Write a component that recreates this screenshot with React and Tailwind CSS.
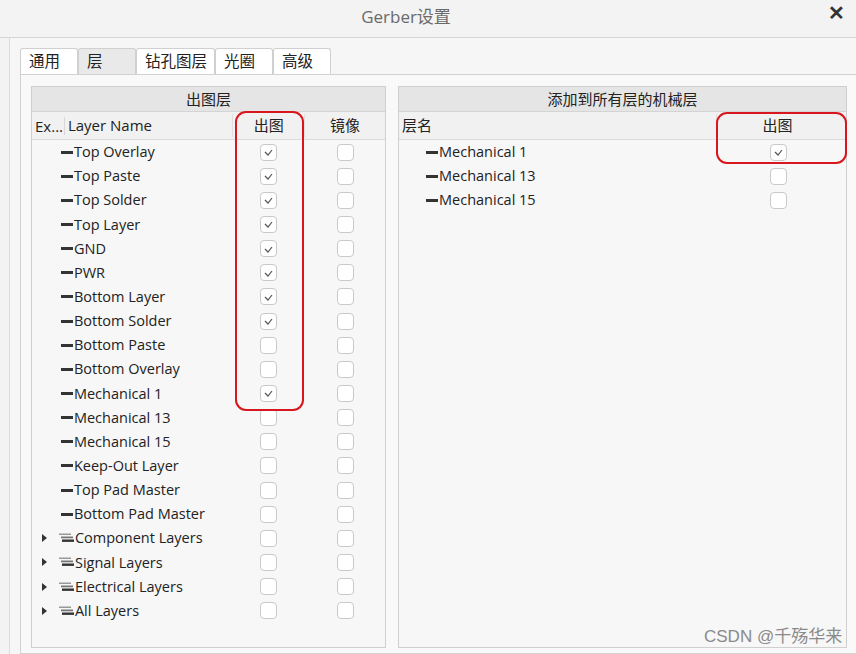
import React from "react";

const FONT = { fontFamily: '"Open Sans", "Noto Sans CJK SC", sans-serif' };

function Check({ checked }) {
  return (
    <div className="w-[17px] h-[17px] rounded-[4px] border border-[#c9c9c9] bg-white flex items-center justify-center">
      {checked && (
        <svg width="9" height="7" viewBox="0 0 9 7" className="mt-[1px]">
          <path d="M1 3 L4 6 L8 1" fill="none" stroke="#555" strokeWidth="1.2" />
        </svg>
      )}
    </div>
  );
}

function Dash() {
  return <div className="w-[12px] h-[3px] bg-[#333] mr-[1px]" />;
}

function Stack() {
  return (
    <svg width="15" height="10" viewBox="0 0 15 10" className="mr-[1px]">
      <rect x="0" y="0.5" width="12" height="1.5" fill="#999" />
      <rect x="2" y="3.5" width="12" height="1.8" fill="#777" />
      <rect x="3" y="6.5" width="12" height="2.4" fill="#333" />
    </svg>
  );
}

function Tri() {
  return (
    <svg width="5" height="8" viewBox="0 0 5 8">
      <path d="M0 0 L5 4 L0 8 Z" fill="#333" />
    </svg>
  );
}

const leftRows = [
  ["Top Overlay", true],
  ["Top Paste", true],
  ["Top Solder", true],
  ["Top Layer", true],
  ["GND", true],
  ["PWR", true],
  ["Bottom Layer", true],
  ["Bottom Solder", true],
  ["Bottom Paste", false],
  ["Bottom Overlay", false],
  ["Mechanical 1", true],
  ["Mechanical 13", false],
  ["Mechanical 15", false],
  ["Keep-Out Layer", false],
  ["Top Pad Master", false],
  ["Bottom Pad Master", false],
  ["Component Layers", false, true],
  ["Signal Layers", false, true],
  ["Electrical Layers", false, true],
  ["All Layers", false, true],
];

const rightRows = [
  ["Mechanical 1", true],
  ["Mechanical 13", false],
  ["Mechanical 15", false],
];

const tabs = [
  ["通用", "w-[58px]"],
  ["层", "w-[58px]"],
  ["钻孔图层", "w-[79px]"],
  ["光圈", "w-[58px]"],
  ["高级", "w-[58px]"],
];

export default function App() {
  return (
    <div className="relative w-[856px] h-[654px] overflow-hidden bg-[#f3f3f3] text-[#222] flex flex-col" style={FONT}>
      {/* title bar */}
      <div className="h-[38px] shrink-0 flex items-center justify-center border-b border-[#d6d6d6] relative">
        <span className="text-[17px] text-[#6a6a6a] -mt-[4px] mr-[44px]">Gerber设置</span>
        <span className="absolute right-[11px] -top-[2px] text-[20px] font-bold text-[#333]">✕</span>
      </div>
      {/* body */}
      <div className="flex-1 ml-[9px] border-l border-[#dcdcdc] bg-[#f6f6f6] pl-[10px] pt-[10px] flex flex-col">
        {/* tabs */}
        <div className="flex h-[26px] items-end">
          {tabs.map(([t, w], i) => (
            <div
              key={t}
              className={`${w} h-[26px] border border-b-0 border-[#d0d0d0] rounded-t-[3px] text-[15.5px] leading-[24px] pl-[8px] ${
                i === 1 ? "bg-[#e9e9e9]" : "bg-white"
              }`}
            >
              {t}
            </div>
          ))}
        </div>
        {/* tab pane */}
        <div className="flex-1 border border-[#d2d2d2] border-r-0 bg-[#f9f9f9] pl-[10px] pt-[11px] pb-[5px] flex gap-[12px]">
          {/* left panel */}
          <div className="w-[355px] border border-[#cfcfcf] bg-[#f7f7f7] flex flex-col">
            <div className="h-[25px] bg-[#e5e5e5] border-b border-[#d4d4d4] flex items-center justify-center text-[15px]">
              出图层
            </div>
            <div className="h-[28px] bg-[#f1f1f1] border-b border-[#dcdcdc] flex items-center text-[15px]">
              <div className="w-[33px] pl-[3px] border-r border-[#d8d8d8] h-[18px] leading-[18px]">Ex...</div>
              <div className="w-[168px] pl-[3px]">Layer Name</div>
              <div className="w-[72px] text-center border-l border-[#e0e0e0]">出图</div>
              <div className="w-[81px] text-center border-l border-[#e0e0e0]">镜像</div>
            </div>
            <div>
              {leftRows.map(([name, c, group]) => (
                <div key={name} className="h-[24.15px] flex items-center text-[14.5px]">
                  <div className="w-[33px] flex items-center pl-[10px]">{group && <Tri />}</div>
                  <div className="w-[168px] flex items-center">
                    {group ? (
                      <span className="ml-[-6px]"><Stack /></span>
                    ) : (
                      <span className="ml-[-4px]"><Dash /></span>
                    )}
                    <span>{name}</span>
                  </div>
                  <div className="w-[72px] flex justify-center pl-[1px]">
                    <Check checked={c} />
                  </div>
                  <div className="w-[81px] flex justify-center pl-[1px]">
                    <Check checked={false} />
                  </div>
                </div>
              ))}
            </div>
          </div>
          {/* right panel */}
          <div className="w-[449px] border border-[#cfcfcf] bg-[#f7f7f7] flex flex-col">
            <div className="h-[25px] bg-[#e5e5e5] border-b border-[#d4d4d4] flex items-center justify-center text-[15px]">
              添加到所有层的机械层
            </div>
            <div className="h-[28px] bg-[#f1f1f1] border-b border-[#dcdcdc] flex items-center text-[15px]">
              <div className="w-[317px] pl-[3px]">层名</div>
              <div className="w-[130px] text-center border-l border-[#e0e0e0] pr-[8px]">出图</div>
            </div>
            <div>
              {rightRows.map(([name, c]) => (
                <div key={name} className="h-[24.15px] flex items-center text-[14.5px]">
                  <div className="w-[317px] flex items-center pl-[27px]">
                    <Dash />
                    <span>{name}</span>
                  </div>
                  <div className="w-[130px] flex justify-center pr-[6px]">
                    <Check checked={c} />
                  </div>
                </div>
              ))}
            </div>
          </div>
        </div>
      </div>
      {/* red highlight boxes */}
      <div className="absolute left-[235px] top-[111px] w-[69px] h-[300px] border-[2.5px] border-[#d8161d] rounded-[11px]" />
      <div className="absolute left-[716px] top-[112px] w-[131px] h-[52px] border-[2.5px] border-[#d8161d] rounded-[11px]" />
      {/* watermark */}
      <div className="absolute left-[704px] top-[624px] text-[17px] text-[#8a8a8a]" style={{ fontFamily: '"Liberation Sans", "Noto Sans CJK SC", sans-serif' }}>
        CSDN @千殇华来
      </div>
    </div>
  );
}
